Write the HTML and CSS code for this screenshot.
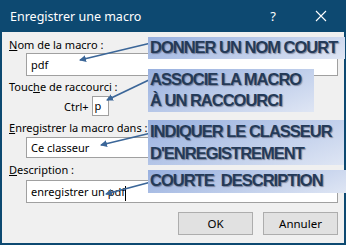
FILE: index.html
```html
<!DOCTYPE html>
<html lang="fr">
<head>
<meta charset="UTF-8">
<title>Enregistrer une macro</title>
<link rel="stylesheet" href="styles.css">
</head>
<body>
<div class="dialog">
  <div class="titlebar">
    <span class="title">Enregistrer une macro</span>
    <span class="help">?</span>
    <svg class="close" width="12" height="12" viewBox="0 0 12 12"><path d="M1 1L11 11M11 1L1 11" stroke="#fff" stroke-width="1.1"/></svg>
  </div>

  <div class="content">
    <div class="label"><u>N</u>om de la macro :</div>
    <div class="field name">pdf</div>

    <div class="label second">Touc<u>h</u>e de raccourci :</div>
    <div class="shortcut">
      <span>Ctrl+</span>
      <div class="key">p</div>
    </div>

    <div class="label third"><u>E</u>nregistrer la macro dans :</div>
    <div class="field store">Ce classeur</div>

    <div class="label fourth"><u>D</u>escription :</div>
    <div class="field desc">enregistrer un pdf<span class="caret"></span></div>

    <div class="buttons">
      <button>OK</button>
      <button>Annuler</button>
    </div>
  </div>

  <!-- annotations par-dessus la boîte de dialogue -->
  <svg class="arrows" width="346" height="245">
    <defs>
      <marker id="head" markerWidth="7" markerHeight="7" refX="6" refY="3.5" orient="auto" markerUnits="userSpaceOnUse">
        <path d="M0 0L7 3.5L0 7z" fill="#3b6698"/>
      </marker>
    </defs>
    <line x1="149" y1="43" x2="78" y2="60" marker-end="url(#head)"/>
    <line x1="149" y1="79" x2="105" y2="100" marker-end="url(#head)"/>
    <line x1="149" y1="133" x2="99" y2="145" marker-end="url(#head)"/>
    <line x1="149" y1="182" x2="104" y2="194" marker-end="url(#head)"/>
  </svg>
  <div class="callout c1">DONNER UN NOM COURT</div>
  <div class="callout c2">ASSOCIE LA MACRO<br>À UN RACCOURCI</div>
  <div class="callout c3">INDIQUER LE CLASSEUR<br>D'ENREGISTREMENT</div>
  <div class="callout c4">COURTE&nbsp; DESCRIPTION</div>
</div>
</body>
</html>
```

FILE: styles.css
```css
body {
  margin: 0;
  background-color: #fff;
  font-family: "Noto Sans", "Open Sans", sans-serif;
  font-size: 11px;
  color: #000;
}
.dialog {
  position: relative;
  width: 342px;
  height: 243px;
  border: 2px solid #0d4971;
  border-top: none;
  background-color: #f0f0f0;
}
.titlebar {
  display: flex;
  align-items: center;
  height: 32px;
  margin: 0 -2px;
  padding: 0 0 0 10px;
  background-color: #0d4971;
  color: #fff;
}
.title {
  font-size: 12.5px;
  flex: 1;
}
.help {
  font-size: 13px;
  margin-right: 39px;
}
.close {
  margin-right: 19px;
}
.content {
  padding: 5px 6px 0 7px;
}
.label {
  line-height: 16px;
  height: 16px;
}
.second { margin-top: 3px; }
.third { margin-top: 4px; }
.fourth { margin-top: 4px; }
.field {
  margin: 0 0 0 17px;
  background-color: #fff;
  border: 1px solid #a0a0a0;
  padding: 0 4px;
  line-height: 21px;
  height: 21px;
}
.name { margin-top: 0; }
.store { margin-top: 1px; height: 19px; line-height: 19px; }
.desc { margin-top: 2px; }
.caret {
  display: inline-block;
  width: 1px;
  height: 15px;
  background-color: #000;
  vertical-align: middle;
}
.shortcut {
  display: flex;
  align-items: center;
  gap: 3px;
  margin: 1px 0 0 55px;
}
.key {
  width: 11px;
  height: 18px;
  line-height: 18px;
  padding: 0 2px;
  background-color: #fff;
  border: 1px solid #a0a0a0;
}
.buttons {
  display: flex;
  justify-content: flex-end;
  gap: 10px;
  margin-top: 9px;
}
button {
  width: 75px;
  height: 23px;
  font-family: "Noto Sans", "Open Sans", sans-serif;
  font-size: 11.5px;
  background-color: #e1e1e1;
  border: 1px solid #adadad;
  padding: 0;
  color: #000;
}
.arrows {
  position: absolute;
  left: 0;
  top: 0;
}
.arrows line {
  stroke: #3b6698;
  stroke-width: 1.7;
}
.callout {
  position: absolute;
  left: 146px;
  padding: 0 0 0 2px;
  background: linear-gradient(160deg, #98b0df, #dfe6f4);
  font-family: "Liberation Sans", Arial, sans-serif;
  font-weight: bold;
  font-size: 16.5px;
  letter-spacing: -1px;
  line-height: 21px;
  color: #243a58;
  text-shadow: 1px 1px 1px rgba(40, 40, 60, 0.45);
  white-space: nowrap;
}
.c1 { top: 37px; width: 195px; height: 22px; }
.c2 { top: 69px; width: 164px; height: 43px; }
.c3 { top: 120px; width: 194px; height: 45px; line-height: 22px; }
.c4 { top: 170px; width: 196px; height: 23px; }
```
